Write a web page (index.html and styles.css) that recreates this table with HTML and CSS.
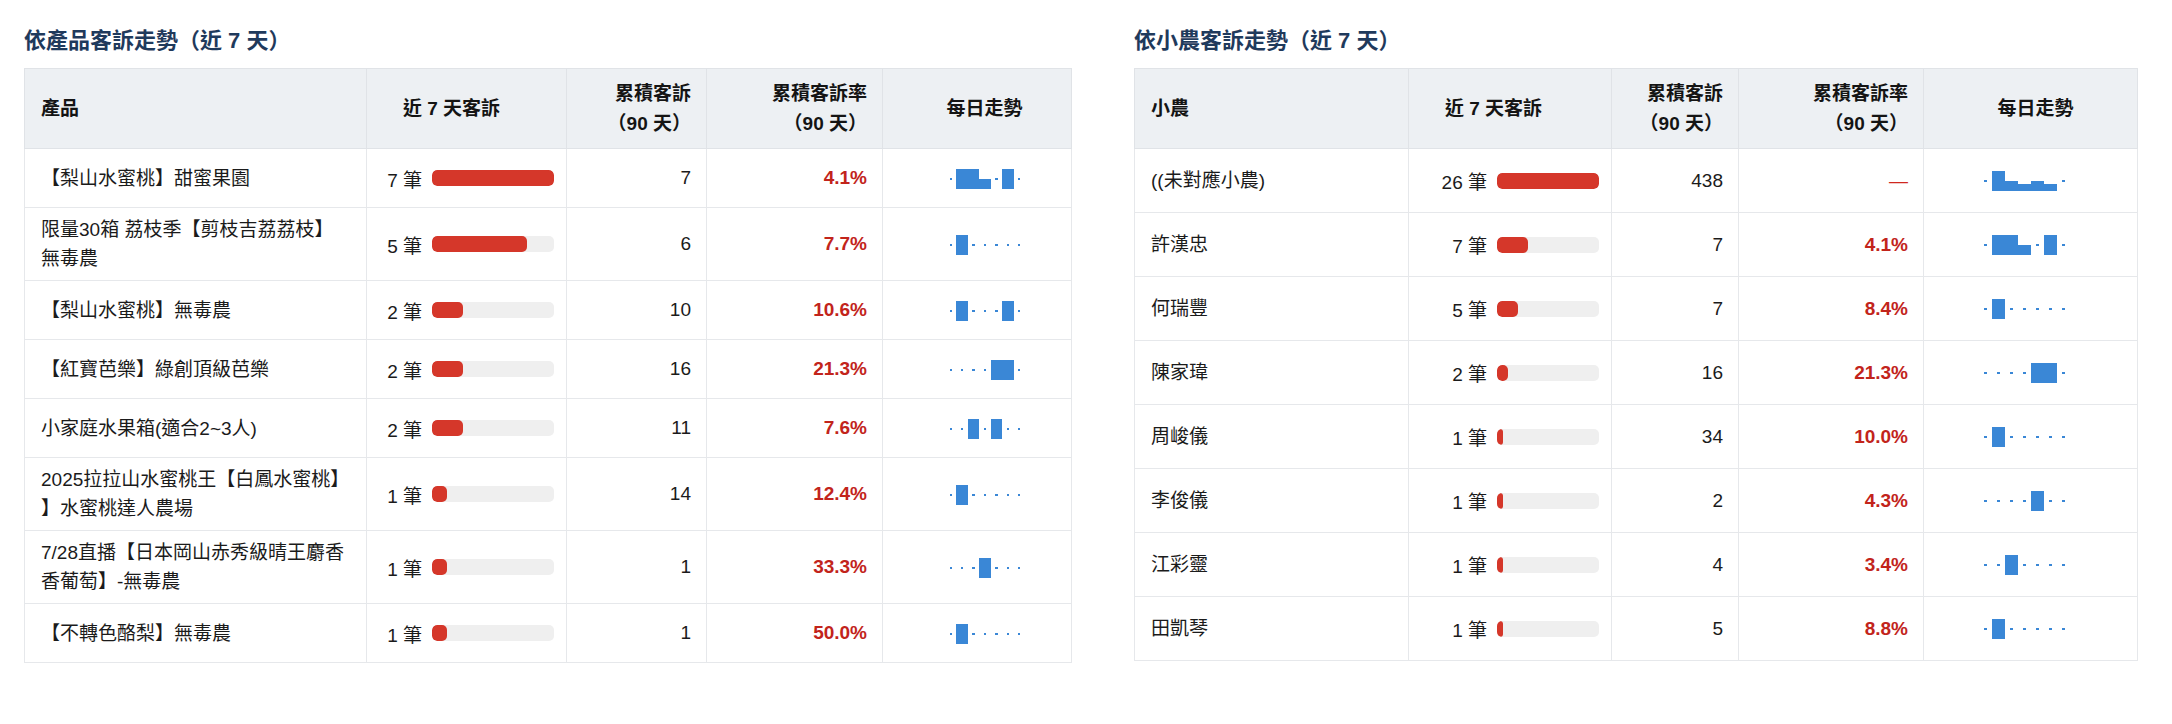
FILE: index.html
```html
<!DOCTYPE html>
<html lang="zh-Hant">
<head>
<meta charset="utf-8">
<title>客訴走勢</title>
<link rel="stylesheet" href="styles.css">
</head>
<body>
<main class="page">
  <section class="panel">
    <h2 class="panel-title">依產品客訴走勢（近 7 天）</h2>
    <table class="tbl tbl-prod">
      <colgroup>
        <col class="w-name"><col class="w-cnt"><col class="w-tot"><col class="w-rate"><col class="w-spark">
      </colgroup>
      <thead>
        <tr>
          <th class="th-name">產品</th>
          <th class="th-cnt">近 7 天客訴</th>
          <th class="th-num">累積客訴<br>（90 天）</th>
          <th class="th-num">累積客訴率<br>（90 天）</th>
          <th class="th-spark">每日走勢</th>
        </tr>
      </thead>
      <tbody>
        <tr class="one">
          <td class="name">【梨山水蜜桃】甜蜜果園</td>
          <td class="cnt"><div class="cnt-wrap"><span class="cnt-label">7 筆</span><span class="track"><span class="fill" style="width:100%"></span></span></div></td>
          <td class="num">7</td>
          <td class="rate">4.1%</td>
          <td class="spark"><svg class="sp" viewBox="0 0 70 20" preserveAspectRatio="none" shape-rendering="crispEdges"><rect x="4" y="8.5" width="2" height="2"/><rect x="10" y="0" width="10" height="20"/><rect x="20" y="0" width="10" height="20"/><rect x="30" y="10" width="10" height="10"/><rect x="44" y="8.5" width="2" height="2"/><rect x="50" y="0" width="10" height="20"/><rect x="64" y="8.5" width="2" height="2"/></svg></td>
        </tr>
        <tr class="two">
          <td class="name">限量30箱 荔枝季【剪枝吉荔荔枝】無毒農</td>
          <td class="cnt"><div class="cnt-wrap"><span class="cnt-label">5 筆</span><span class="track"><span class="fill" style="width:78%"></span></span></div></td>
          <td class="num">6</td>
          <td class="rate">7.7%</td>
          <td class="spark"><svg class="sp" viewBox="0 0 70 20" preserveAspectRatio="none" shape-rendering="crispEdges"><rect x="4" y="8.5" width="2" height="2"/><rect x="10" y="0" width="10" height="20"/><rect x="24" y="8.5" width="2" height="2"/><rect x="34" y="8.5" width="2" height="2"/><rect x="44" y="8.5" width="2" height="2"/><rect x="54" y="8.5" width="2" height="2"/><rect x="64" y="8.5" width="2" height="2"/></svg></td>
        </tr>
        <tr class="one">
          <td class="name">【梨山水蜜桃】無毒農</td>
          <td class="cnt"><div class="cnt-wrap"><span class="cnt-label">2 筆</span><span class="track"><span class="fill" style="width:25%"></span></span></div></td>
          <td class="num">10</td>
          <td class="rate">10.6%</td>
          <td class="spark"><svg class="sp" viewBox="0 0 70 20" preserveAspectRatio="none" shape-rendering="crispEdges"><rect x="4" y="8.5" width="2" height="2"/><rect x="10" y="0" width="10" height="20"/><rect x="24" y="8.5" width="2" height="2"/><rect x="34" y="8.5" width="2" height="2"/><rect x="44" y="8.5" width="2" height="2"/><rect x="50" y="0" width="10" height="20"/><rect x="64" y="8.5" width="2" height="2"/></svg></td>
        </tr>
        <tr class="one">
          <td class="name">【紅寶芭樂】綠創頂級芭樂</td>
          <td class="cnt"><div class="cnt-wrap"><span class="cnt-label">2 筆</span><span class="track"><span class="fill" style="width:25%"></span></span></div></td>
          <td class="num">16</td>
          <td class="rate">21.3%</td>
          <td class="spark"><svg class="sp" viewBox="0 0 70 20" preserveAspectRatio="none" shape-rendering="crispEdges"><rect x="4" y="8.5" width="2" height="2"/><rect x="14" y="8.5" width="2" height="2"/><rect x="24" y="8.5" width="2" height="2"/><rect x="34" y="8.5" width="2" height="2"/><rect x="40" y="0" width="20" height="20"/><rect x="64" y="8.5" width="2" height="2"/></svg></td>
        </tr>
        <tr class="one">
          <td class="name">小家庭水果箱(適合2~3人)</td>
          <td class="cnt"><div class="cnt-wrap"><span class="cnt-label">2 筆</span><span class="track"><span class="fill" style="width:25%"></span></span></div></td>
          <td class="num">11</td>
          <td class="rate">7.6%</td>
          <td class="spark"><svg class="sp" viewBox="0 0 70 20" preserveAspectRatio="none" shape-rendering="crispEdges"><rect x="4" y="8.5" width="2" height="2"/><rect x="14" y="8.5" width="2" height="2"/><rect x="20" y="0" width="10" height="20"/><rect x="34" y="8.5" width="2" height="2"/><rect x="40" y="0" width="10" height="20"/><rect x="54" y="8.5" width="2" height="2"/><rect x="64" y="8.5" width="2" height="2"/></svg></td>
        </tr>
        <tr class="two">
          <td class="name">2025拉拉山水蜜桃王【白鳳水蜜桃】】水蜜桃達人農場</td>
          <td class="cnt"><div class="cnt-wrap"><span class="cnt-label">1 筆</span><span class="track"><span class="fill" style="width:12%"></span></span></div></td>
          <td class="num">14</td>
          <td class="rate">12.4%</td>
          <td class="spark"><svg class="sp" viewBox="0 0 70 20" preserveAspectRatio="none" shape-rendering="crispEdges"><rect x="4" y="8.5" width="2" height="2"/><rect x="10" y="0" width="10" height="20"/><rect x="24" y="8.5" width="2" height="2"/><rect x="34" y="8.5" width="2" height="2"/><rect x="44" y="8.5" width="2" height="2"/><rect x="54" y="8.5" width="2" height="2"/><rect x="64" y="8.5" width="2" height="2"/></svg></td>
        </tr>
        <tr class="two">
          <td class="name">7/28直播【日本岡山赤秀級晴王麝香香葡萄】-無毒農</td>
          <td class="cnt"><div class="cnt-wrap"><span class="cnt-label">1 筆</span><span class="track"><span class="fill" style="width:12%"></span></span></div></td>
          <td class="num">1</td>
          <td class="rate">33.3%</td>
          <td class="spark"><svg class="sp" viewBox="0 0 70 20" preserveAspectRatio="none" shape-rendering="crispEdges"><rect x="4" y="8.5" width="2" height="2"/><rect x="14" y="8.5" width="2" height="2"/><rect x="24" y="8.5" width="2" height="2"/><rect x="30" y="0" width="10" height="20"/><rect x="44" y="8.5" width="2" height="2"/><rect x="54" y="8.5" width="2" height="2"/><rect x="64" y="8.5" width="2" height="2"/></svg></td>
        </tr>
        <tr class="one">
          <td class="name">【不轉色酪梨】無毒農</td>
          <td class="cnt"><div class="cnt-wrap"><span class="cnt-label">1 筆</span><span class="track"><span class="fill" style="width:12%"></span></span></div></td>
          <td class="num">1</td>
          <td class="rate">50.0%</td>
          <td class="spark"><svg class="sp" viewBox="0 0 70 20" preserveAspectRatio="none" shape-rendering="crispEdges"><rect x="4" y="8.5" width="2" height="2"/><rect x="10" y="0" width="10" height="20"/><rect x="24" y="8.5" width="2" height="2"/><rect x="34" y="8.5" width="2" height="2"/><rect x="44" y="8.5" width="2" height="2"/><rect x="54" y="8.5" width="2" height="2"/><rect x="64" y="8.5" width="2" height="2"/></svg></td>
        </tr>
      </tbody>
    </table>
  </section>

  <section class="panel">
    <h2 class="panel-title">依小農客訴走勢（近 7 天）</h2>
    <table class="tbl tbl-farm">
      <colgroup>
        <col class="w-name"><col class="w-cnt"><col class="w-tot"><col class="w-rate"><col class="w-spark">
      </colgroup>
      <thead>
        <tr>
          <th class="th-name">小農</th>
          <th class="th-cnt">近 7 天客訴</th>
          <th class="th-num">累積客訴<br>（90 天）</th>
          <th class="th-num">累積客訴率<br>（90 天）</th>
          <th class="th-spark">每日走勢</th>
        </tr>
      </thead>
      <tbody>
        <tr>
          <td class="name">((未對應小農)</td>
          <td class="cnt"><div class="cnt-wrap"><span class="cnt-label">26 筆</span><span class="track"><span class="fill" style="width:100%"></span></span></div></td>
          <td class="num">438</td>
          <td class="rate dash">—</td>
          <td class="spark"><svg class="sp" viewBox="0 0 70 20" preserveAspectRatio="none" shape-rendering="crispEdges"><rect x="4" y="8.5" width="2" height="2"/><rect x="10" y="0" width="10" height="20"/><rect x="20" y="10" width="10" height="10"/><rect x="30" y="12.5" width="10" height="7.5"/><rect x="40" y="10" width="10" height="10"/><rect x="50" y="12.5" width="10" height="7.5"/><rect x="64" y="8.5" width="2" height="2"/></svg></td>
        </tr>
        <tr>
          <td class="name">許漢忠</td>
          <td class="cnt"><div class="cnt-wrap"><span class="cnt-label">7 筆</span><span class="track"><span class="fill" style="width:30%"></span></span></div></td>
          <td class="num">7</td>
          <td class="rate">4.1%</td>
          <td class="spark"><svg class="sp" viewBox="0 0 70 20" preserveAspectRatio="none" shape-rendering="crispEdges"><rect x="4" y="8.5" width="2" height="2"/><rect x="10" y="0" width="10" height="20"/><rect x="20" y="0" width="10" height="20"/><rect x="30" y="10" width="10" height="10"/><rect x="44" y="8.5" width="2" height="2"/><rect x="50" y="0" width="10" height="20"/><rect x="64" y="8.5" width="2" height="2"/></svg></td>
        </tr>
        <tr>
          <td class="name">何瑞豐</td>
          <td class="cnt"><div class="cnt-wrap"><span class="cnt-label">5 筆</span><span class="track"><span class="fill" style="width:21%"></span></span></div></td>
          <td class="num">7</td>
          <td class="rate">8.4%</td>
          <td class="spark"><svg class="sp" viewBox="0 0 70 20" preserveAspectRatio="none" shape-rendering="crispEdges"><rect x="4" y="8.5" width="2" height="2"/><rect x="10" y="0" width="10" height="20"/><rect x="24" y="8.5" width="2" height="2"/><rect x="34" y="8.5" width="2" height="2"/><rect x="44" y="8.5" width="2" height="2"/><rect x="54" y="8.5" width="2" height="2"/><rect x="64" y="8.5" width="2" height="2"/></svg></td>
        </tr>
        <tr>
          <td class="name">陳家瑋</td>
          <td class="cnt"><div class="cnt-wrap"><span class="cnt-label">2 筆</span><span class="track"><span class="fill" style="width:11%"></span></span></div></td>
          <td class="num">16</td>
          <td class="rate">21.3%</td>
          <td class="spark"><svg class="sp" viewBox="0 0 70 20" preserveAspectRatio="none" shape-rendering="crispEdges"><rect x="4" y="8.5" width="2" height="2"/><rect x="14" y="8.5" width="2" height="2"/><rect x="24" y="8.5" width="2" height="2"/><rect x="34" y="8.5" width="2" height="2"/><rect x="40" y="0" width="20" height="20"/><rect x="64" y="8.5" width="2" height="2"/></svg></td>
        </tr>
        <tr>
          <td class="name">周峻儀</td>
          <td class="cnt"><div class="cnt-wrap"><span class="cnt-label">1 筆</span><span class="track"><span class="fill" style="width:5.5%"></span></span></div></td>
          <td class="num">34</td>
          <td class="rate">10.0%</td>
          <td class="spark"><svg class="sp" viewBox="0 0 70 20" preserveAspectRatio="none" shape-rendering="crispEdges"><rect x="4" y="8.5" width="2" height="2"/><rect x="10" y="0" width="10" height="20"/><rect x="24" y="8.5" width="2" height="2"/><rect x="34" y="8.5" width="2" height="2"/><rect x="44" y="8.5" width="2" height="2"/><rect x="54" y="8.5" width="2" height="2"/><rect x="64" y="8.5" width="2" height="2"/></svg></td>
        </tr>
        <tr>
          <td class="name">李俊儀</td>
          <td class="cnt"><div class="cnt-wrap"><span class="cnt-label">1 筆</span><span class="track"><span class="fill" style="width:5.5%"></span></span></div></td>
          <td class="num">2</td>
          <td class="rate">4.3%</td>
          <td class="spark"><svg class="sp" viewBox="0 0 70 20" preserveAspectRatio="none" shape-rendering="crispEdges"><rect x="4" y="8.5" width="2" height="2"/><rect x="14" y="8.5" width="2" height="2"/><rect x="24" y="8.5" width="2" height="2"/><rect x="34" y="8.5" width="2" height="2"/><rect x="40" y="0" width="10" height="20"/><rect x="54" y="8.5" width="2" height="2"/><rect x="64" y="8.5" width="2" height="2"/></svg></td>
        </tr>
        <tr>
          <td class="name">江彩靈</td>
          <td class="cnt"><div class="cnt-wrap"><span class="cnt-label">1 筆</span><span class="track"><span class="fill" style="width:5.5%"></span></span></div></td>
          <td class="num">4</td>
          <td class="rate">3.4%</td>
          <td class="spark"><svg class="sp" viewBox="0 0 70 20" preserveAspectRatio="none" shape-rendering="crispEdges"><rect x="4" y="8.5" width="2" height="2"/><rect x="14" y="8.5" width="2" height="2"/><rect x="20" y="0" width="10" height="20"/><rect x="34" y="8.5" width="2" height="2"/><rect x="44" y="8.5" width="2" height="2"/><rect x="54" y="8.5" width="2" height="2"/><rect x="64" y="8.5" width="2" height="2"/></svg></td>
        </tr>
        <tr>
          <td class="name">田凱琴</td>
          <td class="cnt"><div class="cnt-wrap"><span class="cnt-label">1 筆</span><span class="track"><span class="fill" style="width:5.5%"></span></span></div></td>
          <td class="num">5</td>
          <td class="rate">8.8%</td>
          <td class="spark"><svg class="sp" viewBox="0 0 70 20" preserveAspectRatio="none" shape-rendering="crispEdges"><rect x="4" y="8.5" width="2" height="2"/><rect x="10" y="0" width="10" height="20"/><rect x="24" y="8.5" width="2" height="2"/><rect x="34" y="8.5" width="2" height="2"/><rect x="44" y="8.5" width="2" height="2"/><rect x="54" y="8.5" width="2" height="2"/><rect x="64" y="8.5" width="2" height="2"/></svg></td>
        </tr>
      </tbody>
    </table>
  </section>
</main>
</body>
</html>
```

FILE: styles.css
```css
* { box-sizing: border-box; }

html, body {
  margin: 0;
  padding: 0;
  background: #ffffff;
}

body {
  font-family: "Liberation Sans", "Noto Sans CJK TC", sans-serif;
  font-size: 19px;
  color: #1b1b1b;
  text-spacing-trim: space-all;
}

.page {
  display: grid;
  grid-template-columns: 1047px 1003px;
  column-gap: 63px;
  padding: 27px 0 0 24px;
  align-items: start;
}

.panel-title {
  margin: 0 0 13px 0;
  font-size: 22px;
  line-height: 28px;
  font-weight: 700;
  color: #1f3a5c;
}

.tbl {
  width: 100%;
  table-layout: fixed;
  border-collapse: collapse;
  border: 1px solid #e2e5e8;
}

.tbl th,
.tbl td {
  border: 1px solid #e6e8eb;
  padding: 0;
  vertical-align: middle;
}

.tbl thead tr {
  height: 80px;
}

.tbl th {
  background: #edf0f3;
  font-weight: 700;
  color: #141414;
  line-height: 30px;
  border-color: #e0e3e7;
}

.th-name {
  text-align: left;
  padding-left: 16px !important;
}

.th-cnt {
  text-align: left;
  padding-left: 36px !important;
}

.th-num {
  text-align: right;
  padding-right: 15px !important;
}

.th-spark {
  text-align: center;
}

.tbl-prod .th-spark { padding-left: 15px !important; }
.tbl-farm .th-spark { padding-left: 10px !important; }

/* column widths */
.tbl-prod .w-name { width: 342px; }
.tbl-prod .w-cnt { width: 200px; }
.tbl-prod .w-tot { width: 140px; }
.tbl-prod .w-rate { width: 176px; }
.tbl-prod .w-spark { width: 189px; }

.tbl-farm .w-name { width: 274px; }
.tbl-farm .w-cnt { width: 203px; }
.tbl-farm .w-tot { width: 127px; }
.tbl-farm .w-rate { width: 185px; }
.tbl-farm .w-spark { width: 214px; }

/* row heights */
.tbl-prod tbody tr.one { height: 59px; }
.tbl-prod tbody tr.two { height: 73px; }
.tbl-farm tbody tr { height: 64px; }

.name {
  padding: 0 16px 0 16px !important;
  line-height: 29px;
  line-break: anywhere;
  text-spacing-trim: space-all;
}

.cnt {
  padding: 0 12px !important;
}

.cnt-wrap {
  display: flex;
  align-items: center;
  gap: 10px;
}

.cnt-label {
  flex: none;
  text-align: right;
  white-space: nowrap;
}

.tbl-prod .cnt-label { width: 43px; }
.tbl-farm .cnt-label { width: 66px; }

.track {
  flex: 1;
  height: 16px;
  background: #efefef;
  border-radius: 5px;
  overflow: hidden;
  display: block;
}

.fill {
  display: block;
  height: 100%;
  background: #d5372a;
  border-radius: 5px;
}

.num {
  text-align: right;
  padding-right: 15px !important;
}

.rate {
  text-align: right;
  padding-right: 15px !important;
  color: #c2241b;
  font-weight: 700;
}

.rate.dash {
  font-weight: 400;
  color: #d0281f;
}

.spark {
  text-align: center;
}

.tbl-prod .spark { padding-left: 15px !important; }
.tbl-farm .spark { padding-right: 13px !important; }

.sp {
  display: inline-block;
  vertical-align: middle;
  height: 20px;
  fill: #3a87d6;
}

.tbl-prod .sp { width: 80px; }
.tbl-farm .sp { width: 91px; }
```
